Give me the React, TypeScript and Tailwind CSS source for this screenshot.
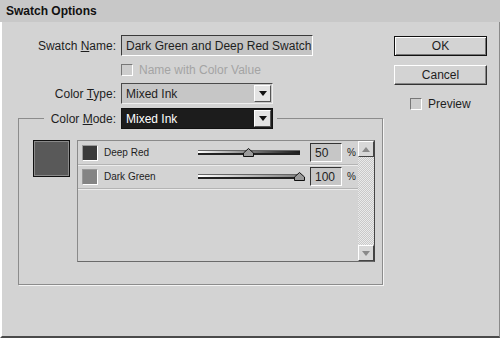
import React from 'react';

const font = "font-['Liberation_Sans',Arial,sans-serif]";

function DropArrow() {
  return (
    <div className="w-[17px] h-[17px] bg-[#e4e4e4] border border-t-white border-l-white border-b-[#555] border-r-[#555] flex items-center justify-center">
      <svg width="8" height="5" viewBox="0 0 8 5">
        <path d="M0 0h8L4 5z" fill="#111" />
      </svg>
    </div>
  );
}

function Select({ value, dark }: { value: string; dark?: boolean }) {
  return (
    <div
      className={
        dark
          ? 'w-[152px] h-[21px] bg-[#1c1c1c] text-white border border-[#111] flex items-center justify-between pl-[4px] pr-[1px]'
          : 'w-[152px] h-[21px] bg-[#c6c6c6] border border-t-[#4a4a4a] border-l-[#4a4a4a] border-b-[#eee] border-r-[#eee] flex items-center justify-between pl-[4px] pr-[1px]'
      }
    >
      <span>{value}</span>
      <DropArrow />
    </div>
  );
}

function Check({ label, disabled }: { label: string; disabled?: boolean }) {
  return (
    <div className="flex items-center gap-[6px]">
      <div className="w-[12px] h-[12px] bg-[#cdcdcd] border border-t-[#777] border-l-[#777] border-b-white border-r-white" />
      <span className={disabled ? 'text-[#a4a4a4]' : ''}>{label}</span>
    </div>
  );
}

function Slider({ pct, dark }: { pct: number; dark?: boolean }) {
  return (
    <div className="relative w-[102px] h-[12px]">
      <div
        className={
          dark
            ? 'absolute left-0 right-0 top-[3px] h-[5px] border-b-2 border-b-[#222] border-t border-t-[#666] bg-gradient-to-r from-white to-[#1a1a1a]'
            : 'absolute left-0 right-0 top-[3px] h-[5px] border-b-2 border-b-[#222] border-t border-t-[#666] bg-gradient-to-r from-white to-[#808080]'
        }
      />
      <svg
        className="absolute top-[1px]"
        style={{ left: `calc(${pct}% - 6px)` }}
        width="11"
        height="9"
        viewBox="0 0 11 9"
      >
        <path d="M0.5 8.5V5L5.5 0.5L10.5 5V8.5Z" fill="#9a9a9a" stroke="#111" />
      </svg>
    </div>
  );
}

function ValueBox({ value }: { value: string }) {
  return (
    <div className="w-[32px] h-[19px] bg-[#c6c6c6] border border-t-[#333] border-l-[#333] border-b-white border-r-white flex items-center pl-[4px] text-[12px]">
      {value}
    </div>
  );
}

const inks = [
  { name: 'Deep Red', swatch: 'bg-[#3a3a3a]', pct: 50, dark: true },
  { name: 'Dark Green', swatch: 'bg-[#848484]', pct: 100, dark: false },
];

function ScrollButton({ up }: { up?: boolean }) {
  return (
    <div className="w-[16px] h-[16px] bg-[#d8d8d8] border border-t-white border-l-white border-b-[#444] border-r-[#444] flex items-center justify-center">
      <svg width="8" height="5" viewBox="0 0 8 5">
        <path d={up ? 'M0 5h8L4 0z' : 'M0 0h8L4 5z'} fill="#8a8a8a" />
      </svg>
    </div>
  );
}

export default function App() {
  return (
    <div className={`w-[500px] h-[338px] bg-[#d3d3d3] ${font} text-[12px] text-[#1e1e1e] flex flex-col overflow-hidden`}>
      <div className="h-[22px] bg-[#c8c8c8] flex items-center pl-[6px] font-bold text-[12px] text-[#111]">
        Swatch Options
      </div>
      <div className="flex-1 flex border-l-2 border-l-white border-r border-r-[#8a8a8a] border-b-2 border-b-[#4a4a4a]">
        <div className="w-[392px] pt-[13px] flex flex-col">
          <div className="flex items-center gap-[5px]">
            <span className="w-[114px] text-right">
              Swatch <span className="underline">N</span>ame:
            </span>
            <div className="w-[192px] h-[21px] bg-[#c4c4c4] border border-t-[#3a3a3a] border-l-[#3a3a3a] border-b-white border-r-white flex items-center pl-[4px]">
              Dark Green and Deep Red Swatch
            </div>
          </div>
          <div className="mt-[5px] pl-[119px]">
            <Check label="Name with Color Value" disabled />
          </div>
          <div className="mt-[4px] flex items-center gap-[5px]">
            <span className="w-[114px] text-right">
              Color <span className="underline">T</span>ype:
            </span>
            <Select value="Mixed Ink" />
          </div>
          <fieldset className="mt-[4px] ml-[16px] w-[365px] h-[177px] border border-[#8c8c8c] shadow-[1px_1px_0_#f4f4f4] px-0 pt-[11px] pb-0 m-0">
            <legend className="ml-[25px] px-[4px]">
              <div className="flex items-center gap-[5px]">
                <span className="w-[68px] text-right">
                  Color <span className="underline">M</span>ode:
                </span>
                <Select value="Mixed Ink" dark />
              </div>
            </legend>
            <div className="flex items-start pl-[14px] gap-[7px]">
              <div className="w-[37px] h-[37px] border border-[#111] bg-[#595959] shadow-[inset_0_0_0_1px_#8a8a8a]" />
              <div className="w-[298px] h-[122px] border border-[#8a8a8a] border-r-[#444] border-b-[#6a6a6a] flex">
                <div className="flex-1 flex flex-col">
                  {inks.map((ink) => (
                    <div
                      key={ink.name}
                      className="h-[24px] flex items-center border-b border-b-[#b4b4b4] shadow-[0_1px_0_#ececec] text-[10px]"
                    >
                      <div className={`ml-[4px] w-[16px] h-[16px] border border-t-[#999] border-l-[#999] border-b-white border-r-white ${ink.swatch}`} />
                      <span className="ml-[6px] w-[94px]">{ink.name}</span>
                      <Slider pct={ink.pct} dark={ink.dark} />
                      <div className="ml-[10px]">
                        <ValueBox value={String(ink.pct)} />
                      </div>
                      <span className="ml-[5px] text-[10px]">%</span>
                    </div>
                  ))}
                </div>
                <div className="w-[16px] flex flex-col bg-[repeating-conic-gradient(#eaeaea_0_25%,#c9c9c9_0_50%)] bg-[length:2px_2px]">
                  <ScrollButton up />
                  <div className="flex-1" />
                  <ScrollButton />
                </div>
              </div>
            </div>
          </fieldset>
        </div>
        <div className="pt-[14px] flex flex-col">
          <div className="w-[93px] h-[20px] border border-[#111] bg-[#d3d3d3] shadow-[inset_1px_1px_0_#fff,inset_-1px_-1px_0_#777] flex items-center justify-center">
            OK
          </div>
          <div className="mt-[9px] w-[93px] h-[20px] bg-[#d3d3d3] border border-t-white border-l-white border-b-[#333] border-r-[#333] shadow-[inset_-1px_-1px_0_#888] flex items-center justify-center">
            Cancel
          </div>
          <div className="mt-[10px] pl-[16px]">
            <Check label="Preview" />
          </div>
        </div>
      </div>
    </div>
  );
}
